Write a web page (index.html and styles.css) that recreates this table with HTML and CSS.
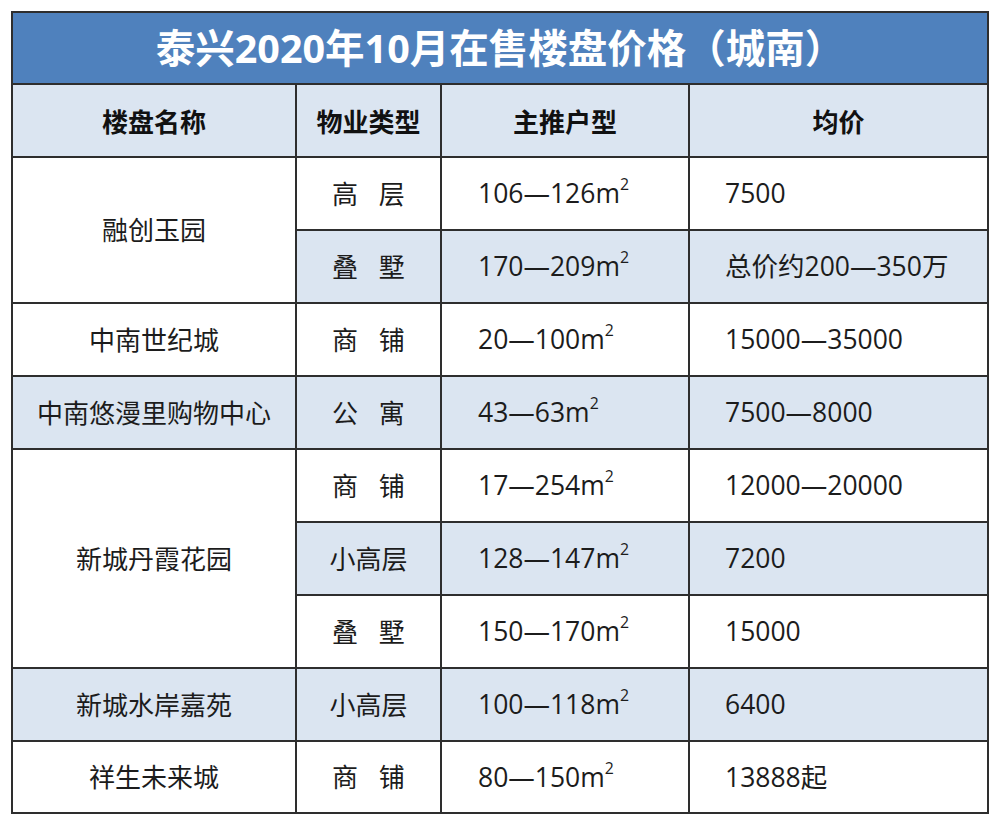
FILE: index.html
```html
<!DOCTYPE html>
<html lang="zh-CN">
<head>
<meta charset="utf-8">
<title>泰兴2020年10月在售楼盘价格（城南）</title>
<link rel="stylesheet" href="styles.css">
</head>
<body>
<table class="price-table">
  <colgroup>
    <col class="c-name">
    <col class="c-type">
    <col class="c-area">
    <col class="c-price">
  </colgroup>
  <tr class="title-row"><td colspan="4" class="title">泰兴2020年10月在售楼盘价格（城南）</td></tr>
  <tr class="head-row">
    <td>楼盘名称</td><td>物业类型</td><td>主推户型</td><td>均价</td>
  </tr>
  <tr class="row">
    <td rowspan="2" class="name">融创玉园</td>
    <td class="type spaced">高 层</td>
    <td class="area">106—126m<sup>2</sup></td>
    <td class="price">7500</td>
  </tr>
  <tr class="row alt">
    <td class="type spaced">叠 墅</td>
    <td class="area">170—209m<sup>2</sup></td>
    <td class="price">总价约200—350万</td>
  </tr>
  <tr class="row">
    <td class="name">中南世纪城</td>
    <td class="type spaced">商 铺</td>
    <td class="area">20—100m<sup>2</sup></td>
    <td class="price">15000—35000</td>
  </tr>
  <tr class="row alt">
    <td class="name">中南悠漫里购物中心</td>
    <td class="type spaced">公 寓</td>
    <td class="area">43—63m<sup>2</sup></td>
    <td class="price">7500—8000</td>
  </tr>
  <tr class="row">
    <td rowspan="3" class="name">新城丹霞花园</td>
    <td class="type spaced">商 铺</td>
    <td class="area">17—254m<sup>2</sup></td>
    <td class="price">12000—20000</td>
  </tr>
  <tr class="row alt">
    <td class="type">小高层</td>
    <td class="area">128—147m<sup>2</sup></td>
    <td class="price">7200</td>
  </tr>
  <tr class="row">
    <td class="type spaced">叠 墅</td>
    <td class="area">150—170m<sup>2</sup></td>
    <td class="price">15000</td>
  </tr>
  <tr class="row alt">
    <td class="name">新城水岸嘉苑</td>
    <td class="type">小高层</td>
    <td class="area">100—118m<sup>2</sup></td>
    <td class="price">6400</td>
  </tr>
  <tr class="row last">
    <td class="name">祥生未来城</td>
    <td class="type spaced">商 铺</td>
    <td class="area">80—150m<sup>2</sup></td>
    <td class="price">13888起</td>
  </tr>
</table>
</body>
</html>
```

FILE: styles.css
```css
html, body {
  margin: 0;
  padding: 0;
  background: #ffffff;
}

body {
  padding: 11px 0 0 11px;
  font-family: "Open Sans", "Noto Sans CJK SC", sans-serif;
  color: #1c1c1c;
}

.price-table {
  table-layout: fixed;
  width: 978px;
  border-collapse: separate;
  border-spacing: 0;
  border-left: 2px solid #2e2e2e;
  border-top: 2px solid #2e2e2e;
}

.c-name { width: 284px; }
.c-type { width: 145px; }
.c-area { width: 248px; }
.c-price { width: 299px; }

.price-table td {
  border-right: 2px solid #2e2e2e;
  border-bottom: 2px solid #2e2e2e;
  padding: 0;
  font-size: 26px;
  line-height: 1;
  vertical-align: middle;
  white-space: nowrap;
}

.title-row { height: 72px; }

.price-table .title {
  background: #4f81bd;
  color: #ffffff;
  font-family: "Open Sans", "Noto Sans CJK SC", sans-serif;
  font-weight: 700;
  font-size: 39.5px;
  text-align: center;
  padding: 2px 0 0 0;
}

.head-row { height: 73px; }

.head-row td {
  background: #dbe5f1;
  font-family: "Noto Sans CJK SC", sans-serif;
  font-weight: 700;
  text-align: center;
  color: #111111;
}

.row { height: 73px; }
.row.last { height: 72px; }

.row.alt td {
  background: #dbe5f1;
}

.row .name {
  background: #ffffff;
  text-align: center;
}

.row.alt .name {
  background: #dbe5f1;
}

.type {
  text-align: center;
}

.spaced {
  word-spacing: 14px;
}

.price-table .area {
  padding-left: 36px;
  font-size: 26.5px;
}

.price-table .price {
  padding-left: 35px;
  font-size: 26.5px;
}

sup {
  font-size: 0.6em;
  line-height: 0;
  vertical-align: 0.8em;
}
```
